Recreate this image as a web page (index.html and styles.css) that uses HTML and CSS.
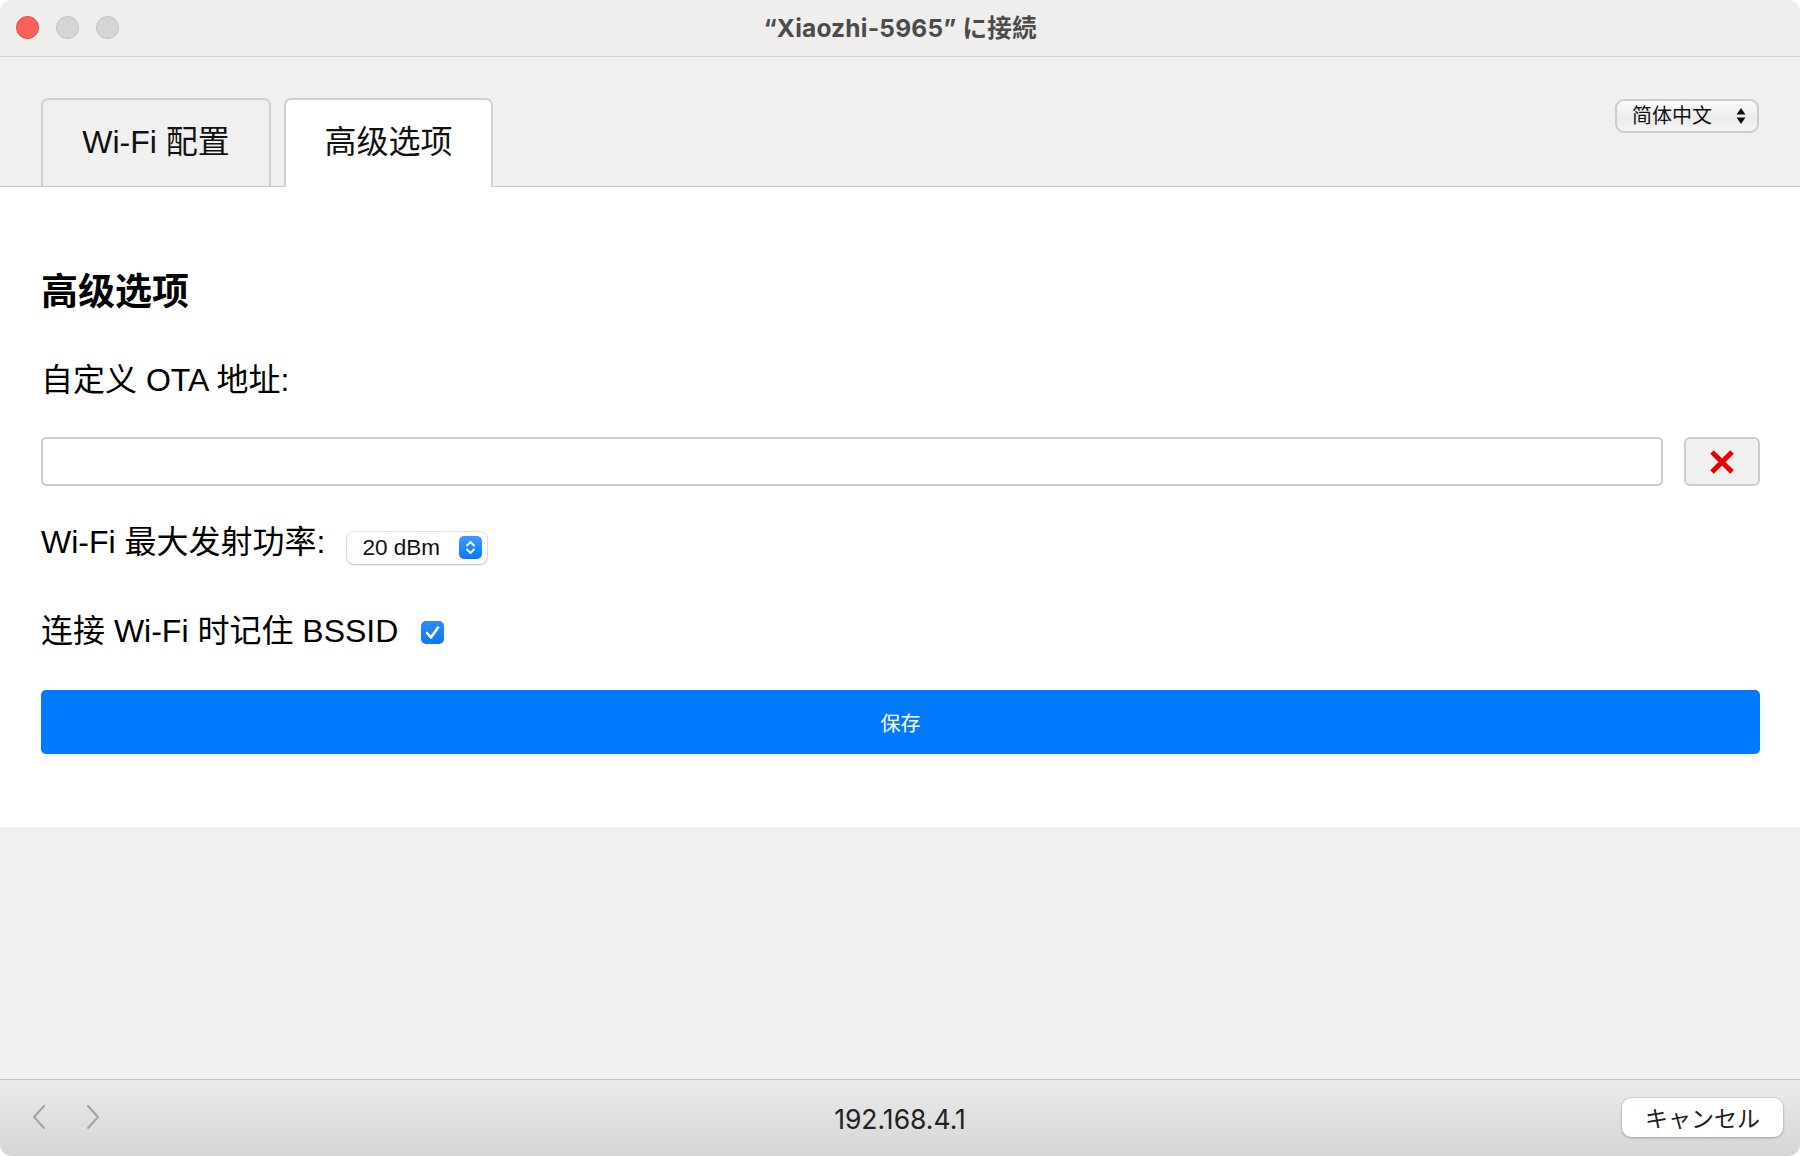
FILE: index.html
```html
<!DOCTYPE html>
<html lang="zh-CN">
<head>
<meta charset="utf-8">
<title>Xiaozhi</title>
<link rel="stylesheet" href="styles.css">
</head>
<body>
<div class="window">
  <header class="titlebar">
    <div class="lights">
      <span class="light red"></span>
      <span class="light gray"></span>
      <span class="light gray"></span>
    </div>
    <div class="title">“Xiaozhi-5965” に接続</div>
    <div></div>
  </header>

  <nav class="tabbar">
    <div class="tabs">
      <div class="tab">Wi-Fi 配置</div>
      <div class="tab active">高级选项</div>
    </div>
    <div class="lang">
      <span class="lang-text">简体中文</span>
      <span class="lang-arrows">
        <svg width="10" height="18" viewBox="0 0 10 18"><path d="M5 1 L9.5 7.5 H0.5 Z" fill="#111"/><path d="M5 17 L9.5 10.5 H0.5 Z" fill="#111"/></svg>
      </span>
    </div>
  </nav>

  <main class="panel">
    <h2 class="heading">高级选项</h2>
    <div class="label">自定义 OTA 地址:</div>
    <div class="input-row">
      <div class="input"></div>
      <button class="clear-btn">
        <svg width="28" height="28" viewBox="0 0 28 28"><path d="M4 4 L24 24 M24 4 L4 24" stroke="#e80000" stroke-width="5" stroke-linecap="butt"/></svg>
      </button>
    </div>
    <div class="power-row">
      <span class="label-inline">Wi-Fi 最大发射功率:</span>
      <div class="select">
        <span class="select-text">20 dBm</span>
        <span class="stepper">
          <svg width="23" height="23" viewBox="0 0 23 23"><path d="M8 9.5 L11.5 6 L15 9.5 M8 13.5 L11.5 17 L15 13.5" stroke="#fff" stroke-width="1.8" fill="none" stroke-linecap="round" stroke-linejoin="round"/></svg>
        </span>
      </div>
    </div>
    <div class="check-row">
      <span class="label-inline">连接 Wi-Fi 时记住 BSSID</span>
      <span class="checkbox">
        <svg width="23" height="23" viewBox="0 0 23 23"><path d="M6 12 L10 16.5 L17 6.5" stroke="#fff" stroke-width="2.6" fill="none" stroke-linecap="round" stroke-linejoin="round"/></svg>
      </span>
    </div>
    <button class="save">保存</button>
  </main>

  <div class="filler"></div>

  <footer class="bottombar">
    <div class="nav-arrows">
      <svg width="14" height="26" viewBox="0 0 14 26"><path d="M12 2 L2 13 L12 24" stroke="#a3a3a3" stroke-width="2" fill="none" stroke-linecap="round" stroke-linejoin="round"/></svg>
      <svg width="14" height="26" viewBox="0 0 14 26"><path d="M2 2 L12 13 L2 24" stroke="#a3a3a3" stroke-width="2" fill="none" stroke-linecap="round" stroke-linejoin="round"/></svg>
    </div>
    <div class="address">192.168.4.1</div>
    <div class="cancel-wrap"><button class="cancel">キャンセル</button></div>
  </footer>
</div>
</body>
</html>
```

FILE: styles.css
```css
* { box-sizing: border-box; }
html, body { margin: 0; padding: 0; }
body {
  background: #ffffff;
  width: 1800px;
  height: 1156px;
  overflow: hidden;
  font-family: "Liberation Sans", "Noto Sans CJK SC", sans-serif;
  color: #000;
}
.window {
  width: 1800px;
  height: 1156px;
  border-radius: 12px;
  overflow: hidden;
  display: flex;
  flex-direction: column;
  background: #f0f0f0;
}
.titlebar {
  height: 57px;
  flex: 0 0 57px;
  background: #efeeed;
  border-bottom: 1px solid #d2d2d2;
  display: grid;
  grid-template-columns: 1fr auto 1fr;
  align-items: center;
}
.lights {
  display: flex;
  gap: 17px;
  padding-left: 16px;
  padding-bottom: 1px;
}
.light {
  width: 23px;
  height: 23px;
  border-radius: 50%;
  display: block;
}
.light.red { background: #fe5f57; border: 1px solid #e1473f; }
.light.gray { background: #d6d5d4; border: 1px solid #c2c1c0; }
.title {
  font-family: "Inter", "Noto Sans CJK JP", sans-serif;
  font-weight: 700;
  font-size: 24.5px;
  color: #4b4b4b;
  letter-spacing: 0.2px;
  padding-bottom: 4px;
}

.tabbar {
  height: 130px;
  flex: 0 0 130px;
  background: #f0f0f0;
  border-bottom: 1px solid #c9c9c9;
  display: flex;
  justify-content: space-between;
  align-items: flex-start;
  padding: 0 41px 0 41px;
}
.tabs {
  display: flex;
  gap: 13px;
  align-self: flex-end;
  margin-bottom: -1px;
}
.tab {
  height: 88px;
  border: 2px solid #d0d0d0;
  border-bottom: none;
  border-radius: 7px 7px 0 0;
  background: #f0f0f0;
  font-size: 32px;
  line-height: 84px;
  text-align: center;
  width: 230px;
  color: #111;
}
.tab.active {
  width: 209px;
  background: #fff;
  height: 89px;
}
.lang {
  margin-top: 42px;
  width: 144px;
  height: 34px;
  border: 2px solid #cccccc;
  border-radius: 9px;
  background: linear-gradient(#fbfbfb, #ececec 55%, #f4f4f4);
  display: flex;
  align-items: center;
  justify-content: space-between;
  padding: 0 11px 0 15px;
}
.lang-text {
  font-size: 20px;
  color: #111;
  line-height: 30px;
}
.lang-arrows { display: flex; align-items: center; }

.panel {
  background: #fff;
  padding: 84px 40px 73px 41px;
  flex: 0 0 auto;
}
.heading {
  margin: 0;
  font-size: 37px;
  font-weight: 700;
  line-height: 44px;
  height: 44px;
}
.label {
  margin-top: 45px;
  font-size: 32px;
  line-height: 40px;
  height: 40px;
}
.input-row {
  margin-top: 37px;
  display: flex;
  gap: 21px;
  height: 49px;
}
.input {
  flex: 1;
  border: 2px solid #cccccc;
  border-radius: 5px;
  background: #fff;
}
.clear-btn {
  width: 76px;
  height: 49px;
  border: 2px solid #cccccc;
  border-radius: 6px;
  background: #f0f0f0;
  display: flex;
  align-items: center;
  justify-content: center;
  padding: 0;
}
.power-row {
  margin-top: 36px;
  height: 40px;
  display: flex;
  align-items: center;
  gap: 22px;
}
.label-inline {
  font-size: 32px;
  line-height: 40px;
}
.select {
  width: 140px;
  height: 32px;
  border-radius: 7px;
  background: #fff;
  box-shadow: 0 0 0 1px rgba(0,0,0,0.10), 0 1px 2px rgba(0,0,0,0.18);
  display: flex;
  align-items: center;
  justify-content: space-between;
  padding: 0 5px 0 15px;
  margin-top: 11px;
}
.select-text {
  font-size: 22.5px;
  color: #111;
  line-height: 28px;
}
.stepper {
  width: 23px;
  height: 23px;
  border-radius: 5px;
  background: linear-gradient(#3f99ff, #0a78f5);
  display: flex;
}
.check-row {
  margin-top: 49px;
  height: 40px;
  display: flex;
  align-items: center;
  gap: 23px;
}
.checkbox {
  width: 23px;
  height: 23px;
  border-radius: 5px;
  background: linear-gradient(#2b8cff, #0a78f5);
  display: flex;
  margin-top: 2px;
}
.save {
  margin-top: 39px;
  width: 100%;
  height: 64px;
  border: none;
  border-radius: 5px;
  background: #007bff;
  color: #fff;
  font-family: "Noto Sans CJK SC", sans-serif;
  font-size: 20px;
  display: block;
  padding: 0;
}
.filler {
  flex: 1;
  background: #f0f0f0;
}
.bottombar {
  height: 77px;
  flex: 0 0 77px;
  border-top: 1px solid #c6c6c6;
  background: linear-gradient(#ebebeb, #d5d5d5);
  display: grid;
  grid-template-columns: 1fr auto 1fr;
  align-items: center;
}
.nav-arrows {
  display: flex;
  gap: 40px;
  padding-left: 32px;
  padding-bottom: 2px;
}
.address {
  font-family: "Inter", "Noto Sans", sans-serif;
  font-size: 26.5px;
  color: #222;
  padding-top: 2px;
}
.cancel-wrap {
  display: flex;
  justify-content: flex-end;
  padding-right: 17px;
}
.cancel {
  width: 161px;
  height: 39px;
  border: none;
  border-radius: 9px;
  background: #fff;
  box-shadow: 0 0 0 0.5px rgba(0,0,0,0.12), 0 1px 3px rgba(0,0,0,0.22);
  font-family: "Noto Sans CJK JP", sans-serif;
  font-weight: 400;
  font-size: 23px;
  color: #222;
  padding: 0;
  margin-bottom: 2px;
}
```
